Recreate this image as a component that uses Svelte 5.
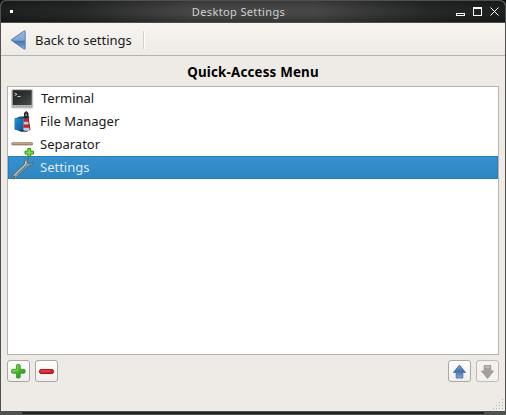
<script>
  let selected = $state(3);
  const entries = [
    { name: 'Terminal', icon: 'terminal' },
    { name: 'File Manager', icon: 'files' },
    { name: 'Separator', icon: 'separator' },
    { name: 'Settings', icon: 'wrench' }
  ];
</script>

<div class="window">
  <header class="titlebar">
    <i class="dot"></i>
    <span class="title">Desktop Settings</span>
    <svg class="controls" width="46" height="12" viewBox="0 0 46 12" shape-rendering="crispEdges">
      <path d="M.5 7.5h8v2h-8z" fill="none" stroke="#fff" />
      <path d="M17.5 1.5h8v8h-8zM18 2.5h7" fill="none" stroke="#fff" />
      <path d="M34.5 1.5l8 8M42.5 1.5l-8 8" stroke="#fff" shape-rendering="auto" />
    </svg>
  </header>

  <div class="toolbar">
    <svg width="16" height="20" viewBox="0 0 16 20">
      <defs>
        <linearGradient id="back" x1="0" y1="0" x2="0" y2="1">
          <stop offset="0" stop-color="#9bb9d8" />
          <stop offset=".5" stop-color="#7fa6d0" />
          <stop offset=".58" stop-color="#4878b8" />
          <stop offset="1" stop-color="#83abd9" />
        </linearGradient>
      </defs>
      <path d="M15.2 1.2v17.6q-.8.8-1.7 0L1 10 13.5 1.3q1-.8 1.7-.1z" fill="url(#back)" stroke="#5579a8" stroke-width=".9" stroke-linejoin="round" />
    </svg>
    <span class="back">Back to settings</span>
    <i class="divider"></i>
  </div>

  <h1>Quick-Access Menu</h1>

  <ul>
    {#each entries as entry, i}
      <li class:selected={selected === i}>
        <svg width="24" height="24" viewBox="0 0 24 24">
          {#if entry.icon === 'terminal'}
            <defs>
              <linearGradient id="screen" x1="0" y1="0" x2="1" y2="1">
                <stop offset="0" stop-color="#202323" />
                <stop offset=".5" stop-color="#303333" />
                <stop offset="1" stop-color="#4b4e4e" />
              </linearGradient>
            </defs>
            <rect x=".7" y="2.5" width="21" height="18.5" rx="1" fill="#b9bbb9" stroke="#c3c4c1" />
            <rect x="1.7" y="3.2" width="19" height="14.8" fill="url(#screen)" />
            <path d="M2 19.3h19" stroke="#999b98" stroke-dasharray="2 1" />
            <path d="M3.5 6l2.5 1.3-2.5 1.3M6.5 9.5h3" fill="none" stroke="#d8dad8" stroke-width=".9" />
          {:else if entry.icon === 'files'}
            <defs>
              <linearGradient id="folder" x1="0" y1="0" x2="1" y2="1">
                <stop offset="0" stop-color="#2890d5" />
                <stop offset="1" stop-color="#07559a" />
              </linearGradient>
            </defs>
            <path d="M4 8.5l5-2h5v13l-4 2-6-2z" fill="#0b5795" />
            <path d="M3.5 8l9 1v12L3.5 19.5z" fill="url(#folder)" />
            <path d="M8 20.3l9-1.5 2.5 1-3.5 2h-6z" fill="#173b58" />
            <path d="M12.7 7.5h5l1.8 12.5q-4 2-7.2 0z" fill="#c4cbd0" />
            <path d="M12.7 8.3h5l.5 3.4h-5.7zM12.5 14.5h6.2l.5 3.2h-6.8z" fill="#c91f27" />
            <path d="M12 7.2l1-1V3l2.2-2 2.3 2v3.2l1 1-1 1.3h-4.5z" fill="#25282c" />
            <path d="M14.4 3.7h1.5v2.4h-1.5z" fill="#8b999e" />
            <path d="M17 8.5l2 11.5" stroke="#6a2530" stroke-width="1.2" opacity=".65" />
          {:else if entry.icon === 'separator'}
            <rect x=".7" y="9.6" width="21" height="2.4" rx="1" fill="#a98c70" stroke="#8d7962" stroke-width=".7" />
            <path d="M1.5 10.2h19" stroke="#d4bba3" stroke-width=".8" />
            <path d="M16.8 15.5h2.9v2.7h2.8V21h-2.8v2.6h-2.9V21H14v-2.8h2.8z" fill="#7bdc50" stroke="#2c9316" stroke-width="1" stroke-linejoin="round" />
          {:else}
            <path d="M1.3 19.6L13.2 8.2q-.3-4 3.3-6.4l.8.3-1 3.5 1.2 1.9 2 .2 2.1-2.2.8.5q-.8 4-5.1 4.5L4.8 22.1q-2 1.5-3.5.1-1.2-1.3 0-2.6z" fill="#879ca5" stroke="#455d69" stroke-width=".8" stroke-linejoin="round" />
            <path d="M3 19.4L14.4 8.5l.3-3" fill="none" stroke="#cad4d5" stroke-width="1" />
            <path d="M6 18.8l9.5-8.9" stroke="#52666e" stroke-width=".7" />
            <circle cx="3.1" cy="20.7" r=".9" fill="#34454c" />
          {/if}
        </svg>
        <span style:margin-left={i === 0 ? '1px' : null}>{entry.name}</span>
      </li>
    {/each}
  </ul>

  <footer>
    <button aria-label="Add">
      <svg width="17" height="17" viewBox="0 0 17 17">
        <defs>
          <linearGradient id="plus" x1="0" y1="0" x2="1" y2="1">
            <stop offset="0" stop-color="#8be060" />
            <stop offset=".5" stop-color="#45b82b" />
            <stop offset="1" stop-color="#1c8a10" />
          </linearGradient>
        </defs>
        <path d="M6.4 2.6q0-1 1-1h1.8q1 0 1 1v3.8H14q1 0 1 1v1.8q0 1-1 1h-3.8V14q0 1-1 1H7.4q-1 0-1-1v-3.8H2.6q-1 0-1-1V7.4q0-1 1-1h3.8z" fill="url(#plus)" stroke="#37932a" stroke-width=".9" />
        <path d="M7.6 3v4.5H3" fill="none" stroke="#8ad966" stroke-width=".7" />
      </svg>
    </button>
    <button aria-label="Remove">
      <svg width="17" height="17" viewBox="0 0 17 17">
        <rect x="1.5" y="6.5" width="14" height="4" rx="1.6" fill="#d3222b" stroke="#ae1720" />
        <path d="M3 7.5h10l-2 1H3z" fill="#e8595d" />
      </svg>
    </button>
    <span class="spacer"></span>
    <button aria-label="Move up">
      <svg width="17" height="17" viewBox="0 0 17 17">
        <defs>
          <linearGradient id="up" x1="0" y1="0" x2="0" y2="1">
            <stop offset="0" stop-color="#7fa3cc" />
            <stop offset=".5" stop-color="#426ea9" />
            <stop offset="1" stop-color="#7eabd9" />
          </linearGradient>
        </defs>
        <path d="M8.5 2L14.6 9.5h-2.8V15H5.2V9.5H2.4z" fill="url(#up)" stroke="#4a70a2" stroke-width=".9" stroke-linejoin="round" />
      </svg>
    </button>
    <button class="disabled" aria-label="Move down" disabled>
      <svg width="17" height="17" viewBox="0 0 17 17">
        <path d="M5.2 2.5h6.6V8h2.8L8.5 15.5 2.4 8h2.8z" fill="#a0a09e" stroke="#989896" stroke-width=".9" stroke-linejoin="round" />
        <path d="M6 4h5" stroke="#b8b8b6" stroke-width="2" />
      </svg>
    </button>
  </footer>

  <div class="status">
    <svg width="12" height="12" viewBox="0 0 12 12" fill="#b7b3af" shape-rendering="crispEdges">
      <path d="M10 1h1v1h-1zM7 4h1v1H7zM10 4h1v1h-1zM4 7h1v1H4zM7 7h1v1H7zM10 7h1v1h-1zM1 10h1v1H1zM4 10h1v1H4zM7 10h1v1H7zM10 10h1v1h-1z" />
    </svg>
  </div>
  <div class="frame-bottom"><i></i></div>
</div>

<style>
  :global(body) { background: #111; }
  .window {
    box-sizing: border-box;
    width: 506px;
    height: 415px;
    display: flex;
    flex-direction: column;
    border: solid #4f5151;
    border-width: 1px 1px 0;
    border-radius: 6px 6px 0 0;
    overflow: hidden;
    background: #eeebe7;
    font: 13px/20px "Noto Sans", sans-serif;
    color: #1a1a1a;
  }
  .titlebar {
    box-sizing: border-box;
    height: 22px;
    flex: none;
    display: grid;
    grid-template-columns: 100px 1fr 100px;
    align-items: center;
    border-bottom: 1px solid #4b4d4d;
    background:
      linear-gradient(#0003, transparent 40%, transparent 60%, #0004),
      linear-gradient(90deg, #1e1f1f, #262727 15%, #474747 38%, #474747 62%, #262727 85%, #1e1f1f);
  }
  .dot { width: 3px; height: 3px; margin-left: 9px; background: #fff; }
  .title {
    text-align: center;
    font-size: 11px;
    line-height: 20px;
    letter-spacing: .37px;
    color: #d0d0d0;
    padding: 1px 29px 0 0;
  }
  .controls { justify-self: end; margin-right: 3px; }
  .toolbar {
    box-sizing: border-box;
    height: 33px;
    flex: none;
    display: flex;
    align-items: center;
    padding: 2px 0 0 9px;
    border-bottom: 1px solid #b6b2ae;
    background: linear-gradient(#f8f5f1, #eeebe7);
  }
  .back { margin-left: 9px; width: 108px; white-space: nowrap; }
  .divider { width: 1px; height: 18px; background: #d2cec9; border-right: 1px solid #fff; }
  h1 {
    margin: 0;
    height: 30px;
    flex: none;
    text-align: center;
    font-size: 13.33px;
    line-height: 32px;
    letter-spacing: .2px;
    color: #000;
  }
  ul {
    box-sizing: border-box;
    height: 269px;
    flex: none;
    margin: 0 6px;
    padding: 0;
    border: 1px solid #b6b3b0;
    background: #fff;
    list-style: none;
  }
  li {
    box-sizing: border-box;
    height: 23px;
    display: flex;
    align-items: center;
    padding-left: 3px;
    line-height: 23px;
  }
  li svg { flex: none; margin-right: 5px; overflow: visible; }
  li.selected {
    color: #dce9f3;
    background: linear-gradient(#3692cf, #2d86c1);
    box-shadow: inset 0 0 0 1px #287fb9;
  }
  footer { display: flex; gap: 4px; padding: 5px 6px 0; flex: none; }
  .spacer { flex: 1; }
  button {
    box-sizing: border-box;
    width: 23px;
    height: 22px;
    padding: 0;
    display: grid;
    place-items: center;
    border: 1px solid #aaa6a2;
    border-radius: 3px;
    background: linear-gradient(#fff, #f1eeeb);
  }
  footer button:first-child { margin-right: 1px; }
  footer button:last-child { margin-left: 1px; }
  .disabled { border-color: #c0bcb8; background: #f4f1ee; }
  .status { flex: 1; display: flex; justify-content: flex-end; align-items: flex-end; padding: 0 1px 1px; }
  .frame-bottom {
    box-sizing: border-box;
    height: 4px;
    flex: none;
    padding: 1px 21px 0;
    background: #4f5151;
  }
  .frame-bottom i { display: block; height: 2px; background: #222424; }
</style>
